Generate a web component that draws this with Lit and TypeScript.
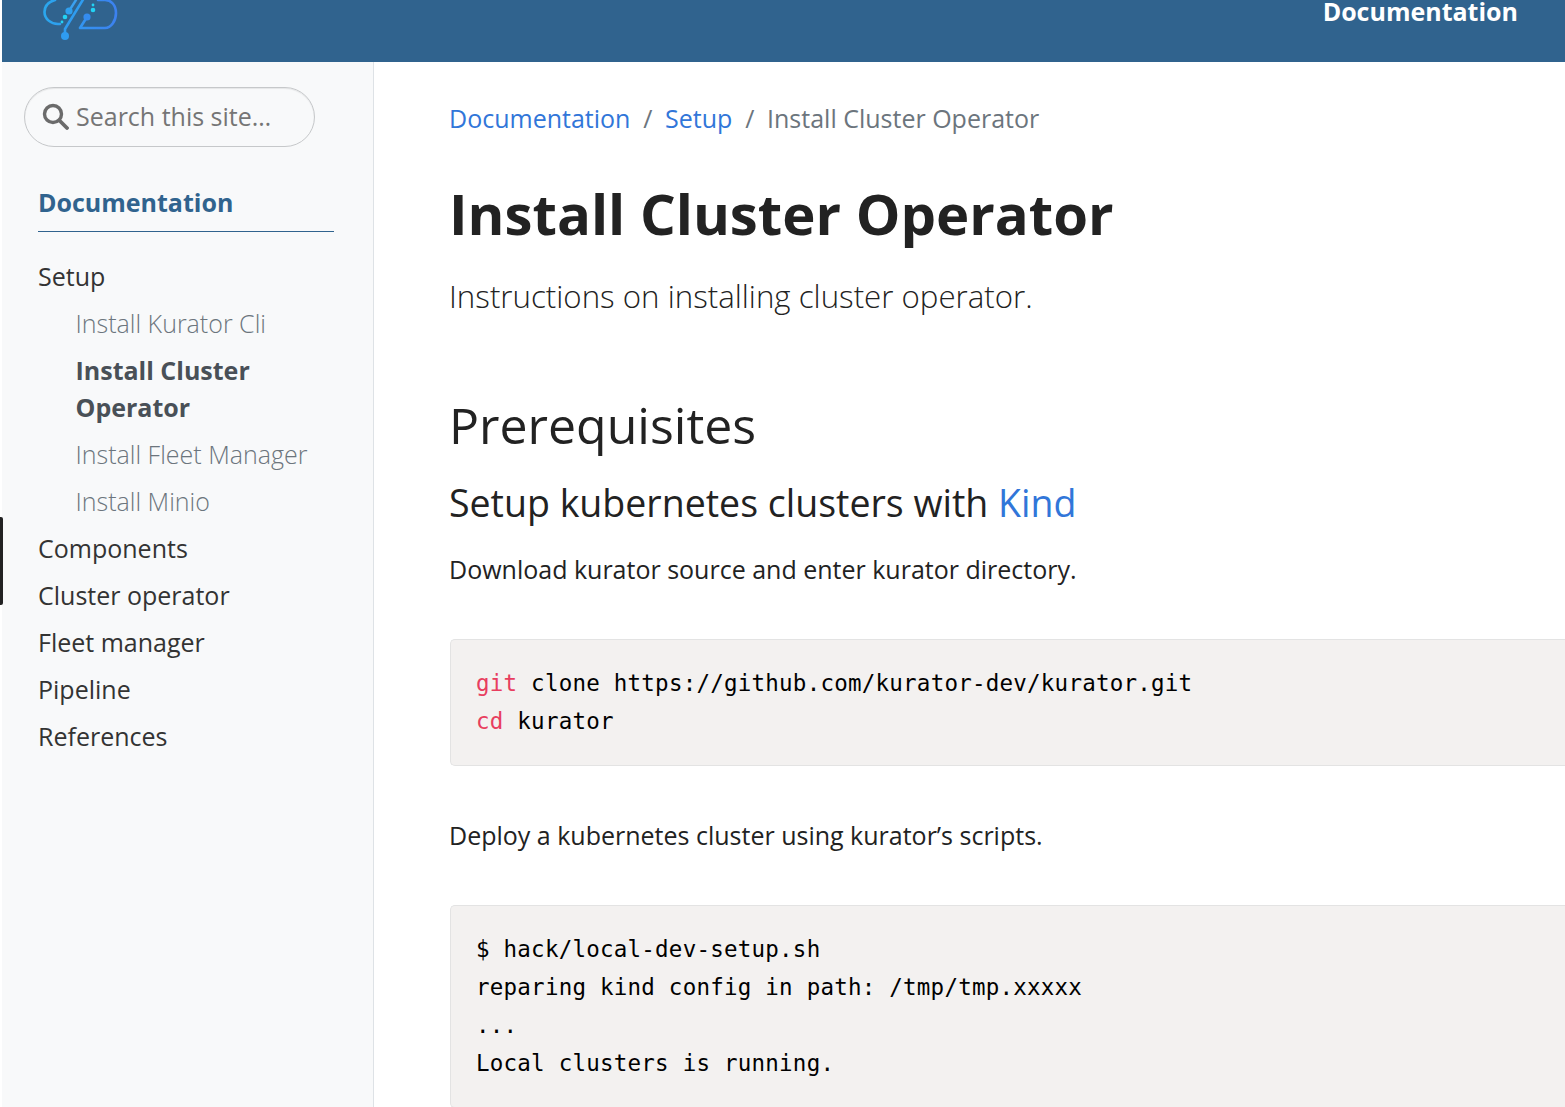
import { LitElement, html, css } from "lit";
import { customElement } from "lit/decorators.js";

@customElement("app-root")
export class AppRoot extends LitElement {
  static styles = css`
    :host { display: block; width: 1565px; height: 1107px; overflow: hidden; position: relative; background: #fff; font-family: "Open Sans", sans-serif; color: #222; }
    * { box-sizing: border-box; }
    .edge { position: absolute; left: 0; top: 517px; width: 3px; height: 88px; background: #222; border-radius: 0 2px 2px 0; }
    header { height: 62px; margin-left: 2px; background: #30638e; display: flex; justify-content: space-between; padding-right: 47px; }
    .logo { display: block; margin-left: 41px; }
    .top-link { color: #fff; font-weight: 700; font-size: 25px; line-height: 23px; }
    .body { display: flex; height: 1045px; }
    aside { width: 372px; flex: none; margin-left: 2px; background: #f8f9fa; border-right: 1px solid #dee2e6; padding: 25px 39px 0 22px; }
    .search { width: 291px; height: 60px; border: 1.5px solid #c6c8ca; border-radius: 30px; box-shadow: inset 0 1px 1px rgba(0,0,0,.075); display: flex; align-items: center; gap: 7px; padding: 0 0 2px 17px; color: #757575; font-size: 25px; }
    .nav-root { margin: 39px 0 0 14px; height: 46px; border-bottom: 1px solid #30638e; color: #30638e; font-weight: 700; font-size: 25px; line-height: 32px; }
    nav { margin: 26px 0 0 14px; display: flex; flex-direction: column; }
    nav a { font-size: 25px; line-height: 37px; margin-bottom: 10px; color: #333; }
    nav a.sub { margin-left: 37.5px; color: #6c757d; font-weight: 300; }
    nav a.active { font-weight: 700; color: #495057; }
    main { flex: 1; padding: 38px 0 0 75px; min-width: 0; }
    .crumbs { display: flex; gap: 12.75px; font-size: 25px; line-height: 37px; color: #6c757d; }
    .crumbs a, .link { color: #3176d9; }
    h1 { margin: 42px 0 0; font-size: 56.25px; font-weight: 700; line-height: 68px; color: #222; }
    .lead { margin: 25px 0 0; font-size: 31.25px; font-weight: 300; line-height: 48px; color: #222; }
    h2 { margin: 75px 0 0; font-size: 50px; font-weight: 400; line-height: 60px; color: #222; }
    h3 { margin: 25px 0 0; font-size: 37.5px; font-weight: 400; line-height: 45px; color: #222; }
    p { margin: 25px 0 0; font-size: 25px; line-height: 38px; color: #222; }
    pre { margin: 51px 0 0 1px; padding: 25px 25px; background: #f3f1f0; border: 1px solid #e3e3e3; border-right: 0; border-radius: 5px 0 0 5px; font-family: "DejaVu Sans Mono", monospace; font-size: 22.5px; line-height: 37.7px; letter-spacing: 0.23px; color: #000; white-space: pre; }
    pre b { font-weight: 400; color: #e83e5f; }
    .cdp { margin-top: 50px; }
  `;

  render() {
    return html`
      <div class="edge"></div>
      <header>
        <svg class="logo" width="78" height="42" viewBox="0 0 78 42" fill="none" stroke-linecap="round" stroke-linejoin="round">
          <defs>
            <linearGradient id="g" gradientUnits="userSpaceOnUse" x1="0" x2="78" y1="0" y2="0">
              <stop offset="0" stop-color="#2aa8ee"/><stop offset="1" stop-color="#3d7ff0"/>
            </linearGradient>
          </defs>
          <path d="M12 0 C5 2 1.5 6 1.5 12 C1.5 19 8 24 15 24 L17 24" stroke="url(#g)" stroke-width="2.6"/>
          <path d="M22 36 L22 29 L41 -2" stroke="#2f9cf0" stroke-width="2.6"/>
          <path d="M26 11 L33 0" stroke="#3ba0f0" stroke-width="2.4"/>
          <path d="M44 17 L37 28 L62 28 C68 28 73 21 73 13 C73 5 68 0 62 0 L55 0" stroke="url(#g)" stroke-width="2.6"/>
          <circle cx="26" cy="11" r="3.6" fill="#2fa0f0"/>
          <circle cx="44" cy="17" r="3.6" fill="#348cf0"/>
          <circle cx="22" cy="36" r="4" fill="#2f9cf0"/>
          <circle cx="22" cy="17" r="2.3" fill="#22d3f5"/>
          <circle cx="19" cy="22" r="1.4" fill="#22d3f5"/>
          <circle cx="50" cy="10" r="2.3" fill="#22d3f5"/>
          <circle cx="50" cy="5" r="1.4" fill="#22d3f5"/>
        </svg>
        <span class="top-link">Documentation</span>
      </header>
      <div class="body">
        <aside>
          <div class="search">
            <svg width="27" height="27" viewBox="0 0 27 27" fill="none" stroke="#6b6b6b">
              <circle cx="11" cy="11" r="8.5" stroke-width="3.4"/>
              <path d="M17.5 17.5 L25 25" stroke-width="3.8" stroke-linecap="round"/>
            </svg>
            <span>Search this site…</span>
          </div>
          <div class="nav-root">Documentation</div>
          <nav>
            <a>Setup</a>
            <a class="sub">Install Kurator Cli</a>
            <a class="sub active">Install Cluster Operator</a>
            <a class="sub">Install Fleet Manager</a>
            <a class="sub">Install Minio</a>
            <a>Components</a>
            <a>Cluster operator</a>
            <a>Fleet manager</a>
            <a>Pipeline</a>
            <a>References</a>
          </nav>
        </aside>
        <main>
          <div class="crumbs"><a>Documentation</a><span>/</span><a>Setup</a><span>/</span><span>Install Cluster Operator</span></div>
          <h1>Install Cluster Operator</h1>
          <div class="lead">Instructions on installing cluster operator.</div>
          <h2>Prerequisites</h2>
          <h3>Setup kubernetes clusters with <a class="link">Kind</a></h3>
          <p>Download kurator source and enter kurator directory.</p>
          <pre><b>git</b> clone https://github.com/kurator-dev/kurator.git
<b>cd</b> kurator</pre>
          <p class="cdp">Deploy a kubernetes cluster using kurator’s scripts.</p>
          <pre>$ hack/local-dev-setup.sh
reparing kind config in path: /tmp/tmp.xxxxx
...
Local clusters is running.</pre>
        </main>
      </div>
    `;
  }
}
